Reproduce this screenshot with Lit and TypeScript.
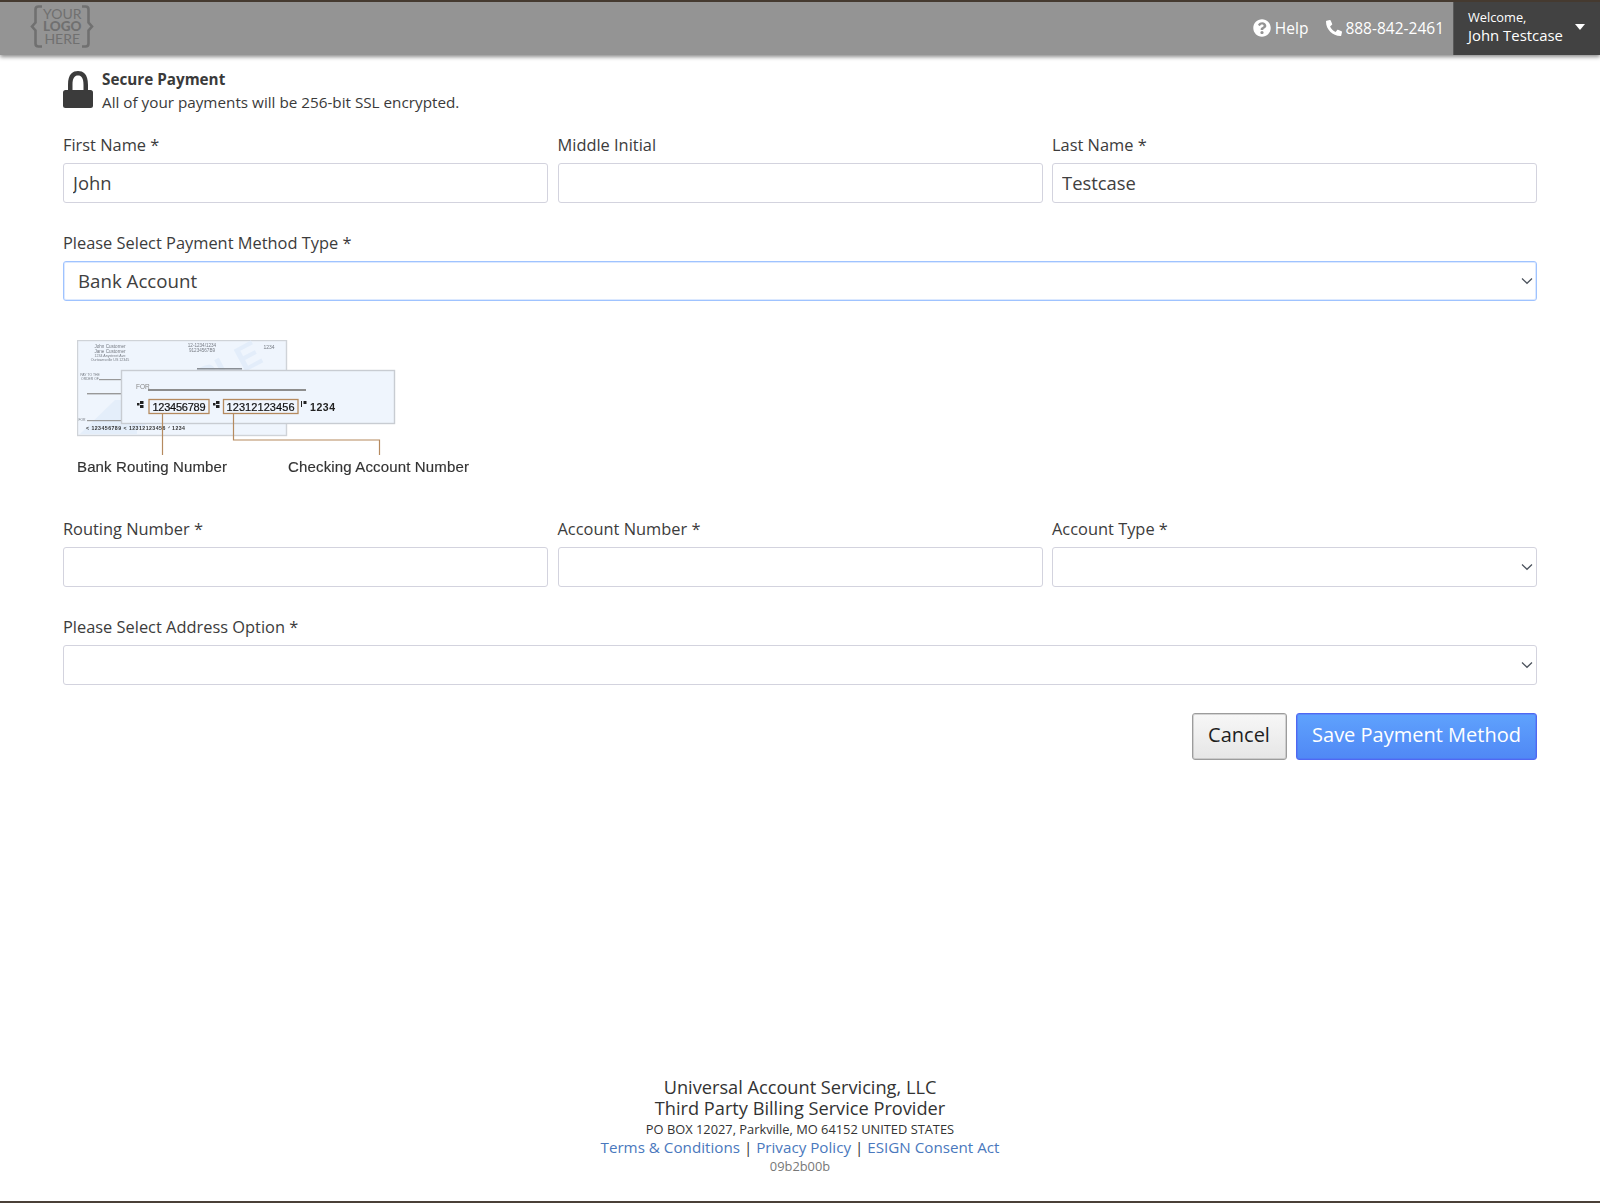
import { LitElement, html, css, svg } from "lit";
import { customElement } from "lit/decorators.js";

const chevron = html`<svg class="chev" viewBox="0 0 12 8" width="12" height="8"><path d="M1 1.5 L6 6.3 L11 1.5" fill="none" stroke="#4c535d" stroke-width="1.25"/></svg>`;

const micr = (x: number, y: number) => svg`<g fill="#222"><rect x="${x}" y="${y}" width="2.5" height="2.5"/><rect x="${x + 3}" y="${y - 2}" width="3.5" height="3"/><rect x="${x + 3}" y="${y + 2}" width="3.5" height="3"/></g>`;

const checkImage = html`<svg class="check" width="400" height="140" viewBox="0 0 400 140">
  <defs><filter id="soft" x="0" y="0" width="100%" height="100%"><feGaussianBlur stdDeviation="0.4"/></filter></defs>
  <g filter="url(#soft)" font-family="'Liberation Sans', sans-serif">
    <rect x="0.5" y="0.5" width="209" height="95" fill="#eff5fd" stroke="#cfd3d8" stroke-width="1.4"/>
    <path d="M3 94 L38 60 L60 60 L60 94Z" fill="#e4eefa"/>
    <text x="55" y="92" font-size="36" font-weight="700" fill="#e3edfa" transform="rotate(-28 55 92)">SAMPLE</text>
    <g fill="#777c84" font-size="4.6" text-anchor="middle">
      <text x="33" y="8">John Customer</text><text x="33" y="12.5">Jane Customer</text>
      <text x="33" y="17" font-size="3.6">1234 Anystreet Ave</text><text x="33" y="21" font-size="3.6">Ourtownsville US 12345</text>
      <text x="125" y="7">12-1234/1234</text><text x="125" y="12">91234567B9</text>
      <text x="192" y="9" font-size="5">1234</text>
      <text x="13" y="36" font-size="3.4">PAY TO THE</text><text x="13" y="40" font-size="3.4">ORDER OF</text>
      <text x="5" y="81" font-size="3.4">FOR</text>
    </g>
    <rect x="120" y="28" width="45" height="1.6" fill="#8a8f96"/>
    <rect x="22" y="39" width="24" height="1.2" fill="#999"/>
    <rect x="10" y="53" width="35" height="1.4" fill="#999"/>
    <rect x="10" y="80" width="35" height="1.2" fill="#999"/>
    <text x="9" y="90" font-size="5.2" font-weight="700" fill="#333" textLength="99">&lt; 123456789 &lt; 12312123456 ᐟ 1234</text>
    <rect x="44.5" y="30.5" width="273" height="53" fill="#eff5fd" stroke="#c8ccd2" stroke-width="1.4"/>
    <text x="59" y="49" font-size="6.5" fill="#888">FOR</text>
    <rect x="71" y="49" width="158" height="2" fill="#8e8e8e"/>
    ${micr(60, 63)}
    <rect x="72" y="59.5" width="60" height="14" fill="none" stroke="#b58a5e" stroke-width="1.3"/>
    <text x="75.5" y="70.5" font-size="11" fill="#111" stroke="#111" stroke-width="0.2" textLength="53">123456789</text>
    ${micr(136, 63)}
    <rect x="146.5" y="59.5" width="74.5" height="14" fill="none" stroke="#b58a5e" stroke-width="1.3"/>
    <text x="149.5" y="70.5" font-size="11" fill="#111" stroke="#111" stroke-width="0.2" textLength="68">12312123456</text>
    <rect x="224" y="61" width="1" height="6" fill="#222"/><rect x="226.5" y="61" width="3" height="3" fill="#222"/>
    <text x="233" y="70.5" font-size="10.5" font-weight="700" fill="#222" textLength="25">1234</text>
    <path d="M85.5 74 V115" fill="none" stroke="#b58a5e" stroke-width="1.2"/>
    <path d="M156.5 74 V100 H302.5 V115" fill="none" stroke="#b58a5e" stroke-width="1.2"/>
    <text x="0" y="132" font-size="15" fill="#333" stroke="#333" stroke-width="0.15" textLength="150">Bank Routing Number</text>
    <text x="211" y="132" font-size="15" fill="#333" stroke="#333" stroke-width="0.15" textLength="181">Checking Account Number</text>
  </g>
</svg>`;

@customElement("app-root")
export class AppRoot extends LitElement {
  static styles = css`
    :host {
      display: flex;
      flex-direction: column;
      min-height: 1203px;
      box-sizing: border-box;
      background: #fff;
      color: #3a3a3a;
      font-family: "Open Sans", sans-serif;
      border-bottom: 2px solid #4a4038;
    }
    * { box-sizing: border-box; }
    header {
      display: flex;
      align-items: stretch;
      height: 55px;
      background: #949494;
      border-top: 2px solid #453a30;
      box-shadow: 0 2px 4px rgba(0, 0, 0, 0.45);
      color: #fff;
    }
    .logo {
      display: flex;
      align-items: center;
      align-self: flex-start;
      margin: 3px 0 0 30px;
      color: #707070;
    }
    .logo-text {
      display: flex;
      flex-direction: column;
      align-items: center;
      font-size: 14px;
      line-height: 12.6px;
      font-family: "Lato", sans-serif;
      font-weight: 400;
    }
    .logo-text b { font-weight: 900; font-size: 13.5px; }
    .spacer { flex: 1; }
    .tool {
      display: flex;
      align-items: center;
      font-size: 15.5px;
      gap: 4px;
      margin: -2px 18px 0 0;
    }
    .tool.phone { margin-right: 9px; gap: 3px; }
    .tool svg { fill: #fff; display: block; }
    .tool svg.flip { transform: scaleX(-1); }
    .user {
      display: flex;
      align-items: flex-start;
      width: 147px;
      background: #424242;
      padding: 5px 15px 0 14px;
      border-left: 1px solid #5a5a5a;
      justify-content: space-between;
    }
    .user-text { display: flex; flex-direction: column; }
    .user-text small { font-size: 12.8px; line-height: 20px; }
    .user-text span { font-size: 14.9px; line-height: 17px; white-space: nowrap; }
    .caret {
      width: 0; height: 0;
      border-left: 5.5px solid transparent;
      border-right: 5.5px solid transparent;
      border-top: 6px solid #fff;
      margin-top: 17px;
    }
    main {
      padding: 15px 63px 0 63px;
      display: flex;
      flex-direction: column;
    }
    .secure {
      display: flex;
      align-items: flex-start;
      gap: 9px;
      height: 52px;
      font-size: 15.25px;
      line-height: 23px;
    }
    .secure b { display: block; font-weight: 700; }
    .secure svg { display: block; fill: #3b3b3b; }
    .secure-text { margin-top: -2px; color: #3a3a3a; }
    .row {
      display: grid;
      gap: 9.5px;
    }
    .row.three { grid-template-columns: repeat(3, 1fr); }
    .row.first { margin-top: 11px; }
    .row + .row { margin-top: 28px; }
    .field { display: flex; flex-direction: column; }
    label {
      font-size: 16.4px;
      line-height: 24px;
      height: 24px;
      margin-bottom: 6px;
      color: #3c3c3c;
    }
    input, select {
      width: 100%;
      height: 40px;
      border: 1px solid #d3d3de;
      border-radius: 3px;
      background: #fff;
      font-family: inherit;
      font-size: 18.4px;
      color: #404040;
      padding: 0 9px 2px 9px;
      outline: none;
      display: block;
      margin: 0;
    }
    select {
      appearance: none;
      -webkit-appearance: none;
      padding: 0 14px 2px 14px;
      font-size: 18.7px;
    }
    select.focus { border-color: #9fc3ff; box-shadow: inset 0 0 0 1px #dce9ff; }
    .sel { position: relative; }
    .chev { position: absolute; right: 4px; top: 16px; }
    .check { display: block; margin: 39px 0 0 14px; }
    .row.routing { margin-top: 37px; }
    .actions {
      display: flex;
      justify-content: flex-end;
      gap: 9.5px;
      margin-top: 28px;
    }
    button {
      height: 47px;
      font-family: inherit;
      font-size: 20px;
      border-radius: 3px;
      padding: 0 0 5px 0;
      margin: 0;
    }
    .cancel {
      width: 95px;
      background: linear-gradient(#f7f7f7, #e6e6e6);
      border: 1px solid #9c9c9c;
      box-shadow: inset 0 0 0 1px rgba(160, 160, 160, 0.4);
      color: #1e1e1e;
    }
    .save {
      width: 241px;
      background: linear-gradient(#5fa2fd, #5088f5);
      border: 1px solid #4f68f2;
      box-shadow: inset 0 0 0 1px rgba(79, 104, 242, 0.4);
      color: #fff;
    }
    footer {
      margin-top: auto;
      padding-bottom: 25px;
      text-align: center;
      display: flex;
      flex-direction: column;
      align-items: center;
    }
    .big { font-size: 18.2px; line-height: 20px; color: #333; }
    .big + .big { margin-top: 1px; }
    .addr { font-size: 12.85px; line-height: 20px; color: #333; margin-top: 1px; }
    .links { font-size: 15.2px; line-height: 17px; color: #333; }
    .links a { color: #4a78bd; text-decoration: none; }
    .hash { font-size: 12.85px; line-height: 20px; color: #777; }
  `;

  private field(label: string, value = "") {
    return html`<div class="field"><label>${label}</label><input .value=${value} /></div>`;
  }

  private select(label: string, value = "", focus = false) {
    return html`<div class="field"><label>${label}</label>
      <div class="sel">
        <select class=${focus ? "focus" : ""}>${value ? html`<option>${value}</option>` : html`<option></option>`}</select>
        ${chevron}
      </div></div>`;
  }

  render() {
    return html`
      <header>
        <div class="logo">
          <svg width="13" height="43" viewBox="0 0 13 43"><path d="M12 1.5 H8.5 Q5.5 1.5 5.5 4.5 V17.5 L2 21.5 L5.5 25.5 V38.5 Q5.5 41.5 8.5 41.5 H12" fill="none" stroke="currentColor" stroke-width="2.6"/></svg>
          <div class="logo-text"><span>YOUR</span><b>LOGO</b><span>HERE</span></div>
          <svg width="13" height="43" viewBox="0 0 13 43"><path d="M1 1.5 H4.5 Q7.5 1.5 7.5 4.5 V17.5 L11 21.5 L7.5 25.5 V38.5 Q7.5 41.5 4.5 41.5 H1" fill="none" stroke="currentColor" stroke-width="2.6"/></svg>
        </div>
        <div class="spacer"></div>
        <div class="tool">
          <svg width="18" height="18" viewBox="0 0 512 512"><path d="M504 256c0 136.997-111.043 248-248 248S8 392.997 8 256C8 119.083 119.043 8 256 8s248 111.083 248 248zM262.655 90c-54.497 0-89.255 22.957-116.549 63.758-3.536 5.286-2.353 12.415 2.715 16.258l34.699 26.31c5.205 3.947 12.621 3.008 16.665-2.122 17.864-22.658 30.113-35.797 57.303-35.797 20.429 0 45.698 13.148 45.698 32.958 0 14.976-12.363 22.667-32.534 33.976C247.128 238.528 216 254.941 216 296v4c0 6.627 5.373 12 12 12h56c6.627 0 12-5.373 12-12v-1.333c0-28.462 83.186-29.647 83.186-106.667 0-58.002-60.165-102-116.531-102zM256 338c-25.365 0-46 20.635-46 46 0 25.364 20.635 46 46 46s46-20.636 46-46c0-25.365-20.635-46-46-46z"/></svg>
          <span>Help</span>
        </div>
        <div class="tool phone">
          <svg class="flip" width="16" height="16" viewBox="0 0 512 512"><path d="M493.4 24.6l-104-24c-11.3-2.6-22.9 3.3-27.5 13.9l-48 112c-4.2 9.8-1.4 21.3 6.9 28l60.6 49.6c-36 76.7-98.9 140.5-177.2 177.2l-49.6-60.6c-6.8-8.3-18.2-11.1-28-6.9l-112 48C3.9 366.5-2 378.1.6 389.4l24 104C27.1 504.2 36.7 512 48 512c256.1 0 464-207.5 464-464 0-11.2-7.7-20.9-18.6-23.4z"/></svg>
          <span>888-842-2461</span>
        </div>
        <div class="user">
          <div class="user-text"><small>Welcome,</small><span>John Testcase</span></div>
          <div class="caret"></div>
        </div>
      </header>
      <main>
        <div class="secure">
          <svg width="30" height="38" viewBox="0 0 30 38"><path d="M5 21 V15 C5 3.5 10 1 15 1 C20 1 25 3.5 25 15 V21 H20.5 V15 C20.5 8 18.5 5.5 15 5.5 C11.5 5.5 9.5 8 9.5 15 V21Z"/><rect x="0" y="20" width="30" height="18" rx="2.5"/></svg>
          <div class="secure-text"><b>Secure Payment</b>All of your payments will be 256-bit SSL encrypted.</div>
        </div>
        <div class="row three first">
          ${this.field("First Name *", "John")}
          ${this.field("Middle Initial")}
          ${this.field("Last Name *", "Testcase")}
        </div>
        <div class="row">${this.select("Please Select Payment Method Type *", "Bank Account", true)}</div>
        ${checkImage}
        <div class="row three routing">
          ${this.field("Routing Number *")}
          ${this.field("Account Number *")}
          ${this.select("Account Type *")}
        </div>
        <div class="row">${this.select("Please Select Address Option *")}</div>
        <div class="actions">
          <button class="cancel">Cancel</button>
          <button class="save">Save Payment Method</button>
        </div>
      </main>
      <footer>
        <div class="big">Universal Account Servicing, LLC</div>
        <div class="big">Third Party Billing Service Provider</div>
        <div class="addr">PO BOX 12027, Parkville, MO 64152 UNITED STATES</div>
        <div class="links"><a href="#">Terms &amp; Conditions</a> | <a href="#">Privacy Policy</a> | <a href="#">ESIGN Consent Act</a></div>
        <div class="hash">09b2b00b</div>
      </footer>
    `;
  }
}
